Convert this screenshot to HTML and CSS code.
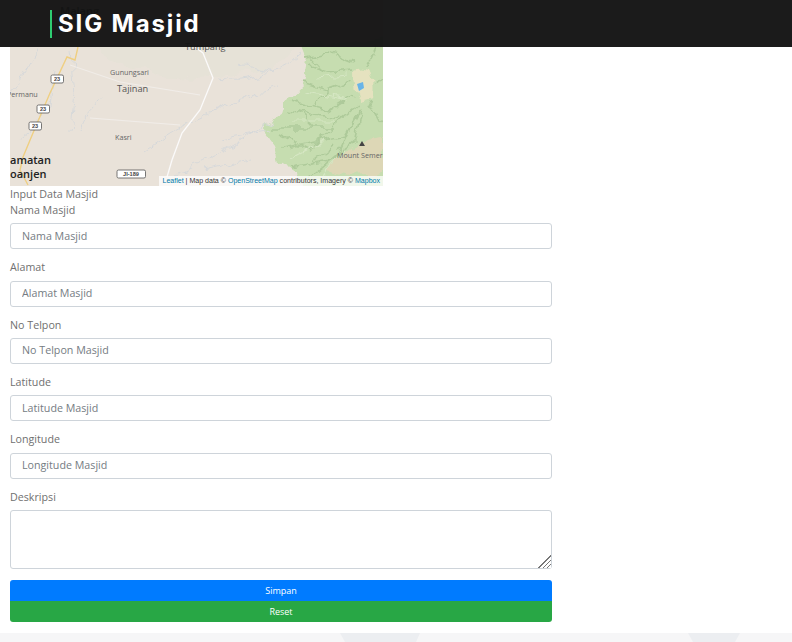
FILE: index.html
```html
<!DOCTYPE html>
<html lang="id">
<head>
<meta charset="utf-8">
<title>SIG Masjid</title>
<link rel="stylesheet" href="styles.css">
</head>
<body>
<header class="topbar"><h1 class="brand">SIG Masjid</h1></header>
<main class="content">
  <div class="map">
    <svg class="map-art" width="373" height="186" viewBox="0 0 373 186">
      <defs>
        <filter id="rough" x="-5%" y="-5%" width="110%" height="110%">
          <feTurbulence type="fractalNoise" baseFrequency="0.07" numOctaves="3" seed="4" result="n"/>
          <feDisplacementMap in="SourceGraphic" in2="n" scale="13" xChannelSelector="R" yChannelSelector="G"/>
          <feGaussianBlur stdDeviation="0.6"/>
        </filter>
        <filter id="soft"><feGaussianBlur stdDeviation="0.45"/></filter>
      </defs>
      <rect width="373" height="186" fill="#e9e2d9"/>
      <g filter="url(#rough)">
        <path d="M0 0 L60 30 L100 60 L170 80 L260 70 L320 20 L373 0 Z" fill="#e6e2d7"/>
        <path d="M290 45 L297 63 L293 83 L277 100 L273 113 L252 128 L267 147 L270 163 L287 173 L292 192 L380 192 L380 40 Z" fill="#c6ddb0"/>
        <g fill="none" stroke="#aeca9a" stroke-width="1.6">
          <path d="M345 62 L320 52 L295 58"/><path d="M342 70 L318 72 L300 66"/><path d="M340 82 L318 90 L292 82"/>
          <path d="M342 95 L318 110 L282 100"/><path d="M348 105 L320 128 L262 128"/><path d="M335 118 L305 115 L280 110"/>
          <path d="M352 106 L335 135 L272 148"/><path d="M345 115 L325 160 L282 168"/><path d="M352 108 L345 140 L300 178"/>
          <path d="M360 100 L373 125"/><path d="M364 85 L373 78"/><path d="M358 66 L368 45"/><path d="M320 128 L300 150 L270 135"/>
          <path d="M318 90 L305 105"/><path d="M300 58 L312 72"/><path d="M305 128 L290 112"/><path d="M325 145 L300 165"/>
        </g>
        <g fill="none" stroke="#d6e7c4" stroke-width="1.2">
          <path d="M335 75 L305 78"/><path d="M338 100 L295 92"/><path d="M325 122 L280 122"/><path d="M315 140 L280 158"/><path d="M335 150 L310 178"/>
        </g>
        <path d="M343 72 Q350 66 359 70 Q364 84 362 98 L350 101 Q343 90 343 72 Z" fill="#e5e2bf"/>
        <path d="M318 170 Q340 140 373 137 L373 172 Q345 180 318 170 Z" fill="#ddd7b6"/>
      </g>
      <path d="M347 84 L353 82 L354 88 L349 91 Z" fill="#68b4e8" filter="url(#soft)"/>
      <g fill="none" stroke="#d7d9da" stroke-width="1" filter="url(#rough)">
        <path d="M0 92 L14 72 L28 48"/><path d="M45 70 L40 105 L20 130 L8 140"/><path d="M62 50 L66 95 L62 130"/>
        <path d="M95 95 L78 115 L70 132"/><path d="M205 78 Q250 85 290 55"/><path d="M135 150 Q190 110 268 88"/>
        <path d="M165 175 Q220 150 262 122"/><path d="M210 140 L262 130"/><path d="M230 65 L265 72"/><path d="M195 170 L240 160"/>
      </g>
      <path d="M60 65 L110 82 L190 95 M80 118 L170 125" fill="none" stroke="#f1ede9" stroke-width="1" filter="url(#soft)"/>
      <path d="M185 47 L193 53 L203 78 L190 110 L172 133 L162 160 L157 177" fill="none" stroke="#fbfafa" stroke-width="1.3" filter="url(#soft)"/>
      <path d="M68 47 L65 60 L57 57 L40 93 L23 133 L13 157 L10 170 L18 185" fill="none" stroke="#efcf82" stroke-width="1.4" filter="url(#soft)"/>
      <g class="place">
        <text class="big" x="50" y="15">Malang</text>
        <text class="mid" x="175" y="50">Tumpang</text>
        <text class="small" x="100" y="75">Gunungsari</text>
        <text class="mid" x="107" y="92">Tajinan</text>
        <text class="small" x="105" y="140">Kasri</text>
        <text class="small" x="-3" y="97">Permanu</text>
        <text class="small" x="327" y="158">Mount Semeru</text>
        <text class="big" x="0" y="164">amatan</text>
        <text class="big" x="0" y="178">oanjen</text>
      </g>
      <g class="shield">
        <rect x="41" y="75" width="12.5" height="8" rx="1.5"/><text x="47" y="81.3">23</text>
        <rect x="27" y="105" width="12.5" height="8" rx="1.5"/><text x="33" y="111.3">23</text>
        <rect x="19" y="122" width="12.5" height="8" rx="1.5"/><text x="25" y="128.3">23</text>
        <rect x="107" y="170" width="28.5" height="8" rx="1.5"/><text x="121" y="176.3">JI-189</text>
      </g>
      <path class="peak" d="M352 141 L355 146 L349 146 Z"/>
    </svg>
    <div class="attribution"><a href="#">Leaflet</a> | Map data © <a href="#">OpenStreetMap</a> contributors, Imagery © <a href="#">Mapbox</a></div>
  </div>
  <form class="form">
    <div class="form-title">Input Data Masjid</div>
    <label class="label" for="nama">Nama Masjid</label>
    <input class="input" id="nama" type="text" placeholder="Nama Masjid">
    <label class="label" for="alamat">Alamat</label>
    <input class="input" id="alamat" type="text" placeholder="Alamat Masjid">
    <label class="label" for="telp">No Telpon</label>
    <input class="input" id="telp" type="text" placeholder="No Telpon Masjid">
    <label class="label" for="lat">Latitude</label>
    <input class="input" id="lat" type="text" placeholder="Latitude Masjid">
    <label class="label" for="lng">Longitude</label>
    <input class="input" id="lng" type="text" placeholder="Longitude Masjid">
    <label class="label" for="desk">Deskripsi</label>
    <textarea class="textarea" id="desk"></textarea>
    <div class="actions">
      <button class="btn btn-primary" type="submit">Simpan</button>
      <button class="btn btn-success" type="reset">Reset</button>
    </div>
  </form>
</main>
<footer class="footer">
  <svg class="footer-art" width="792" height="9" viewBox="0 0 792 9"><path d="M340 0 H420 L416 9 H345 Z M688 0 H740 L735 9 H693 Z" fill="#eceef1"/></svg>
</footer>
</body>
</html>
```
FILE: styles.css
```css
* { box-sizing: border-box; }
html, body { margin: 0; padding: 0; height: 642px; overflow: hidden; background: #fff; }
body { font-family: "Open Sans", sans-serif; color: #666; position: relative; }
.topbar {
  position: absolute; top: 0; left: 0; right: 0; height: 47px; z-index: 10;
  background: rgba(20,20,20,.97); padding: 10px 0 0 50px;
}
.brand {
  margin: 0; height: 28px; border-left: 2px solid #2ecc71; padding-left: 6px;
  font-family: "Inter", sans-serif; font-size: 24px; line-height: 28px; font-weight: 700;
  letter-spacing: 1.85px; color: #fff;
}
.content { padding: 0 0 0 10px; height: 633px; }
.map { position: relative; width: 373px; height: 186px; overflow: hidden; }
.map-art { display: block; }
.shield rect { fill: #fff; stroke: #555; stroke-width: .8; }
.shield text { font: 700 5.6px "Liberation Sans", sans-serif; fill: #444; text-anchor: middle; }
.place text { font-family: "Open Sans", sans-serif; fill: #666; }
.place .small { font-size: 7.2px; }
.place .mid { font-size: 9.2px; fill: #555; }
.place .big { font-size: 11px; font-weight: 600; fill: #222; }
.peak { fill: #444; }
.attribution {
  position: absolute; right: 0; bottom: 0; height: 10px; padding: 0 3px;
  background: rgba(255,255,255,.75); color: #333;
  font: 7.05px/10px "Liberation Sans", sans-serif; white-space: nowrap;
}
.attribution a { color: #0078a8; text-decoration: none; }
.form { width: 542px; }
.form-title, .label { display: block; font-size: 10.7px; line-height: 16px; color: #707070; }
.form-title { padding-top: .2px; margin-bottom: -.4px; }
.label { margin-bottom: 5.4px; }
.input, .textarea {
  display: block; width: 100%; border: 1px solid #ced4da; border-radius: 3px; background: #fff;
  font: 10.7px "Open Sans", sans-serif; color: #666; outline: none;
}
.input { height: 26px; padding: 0 11px 1px; margin-bottom: 10px; }
.input::placeholder { color: #757c83; opacity: 1; }
.textarea { height: 59px; resize: vertical; margin-bottom: 11px; padding: 4px 11px; }
.textarea::-webkit-resizer {
  background:
    linear-gradient(135deg, #fff 50%, transparent 50%),
    repeating-linear-gradient(135deg, #777 0 1px, #fff 1px 3px);
}
.actions { display: flex; flex-direction: column; }
.btn {
  display: block; width: 100%; border: 0; color: #fff; cursor: pointer;
  font: 9px "Open Sans", sans-serif; text-align: center; padding: 0;
}
.btn-primary { height: 21px; background: #007bff; border-radius: 3px 3px 0 0; }
.btn-success { height: 21px; background: #28a745; border-radius: 0 0 3px 3px; }
.footer { height: 9px; background: #f6f6f7; }
.footer-art { display: block; }
```
